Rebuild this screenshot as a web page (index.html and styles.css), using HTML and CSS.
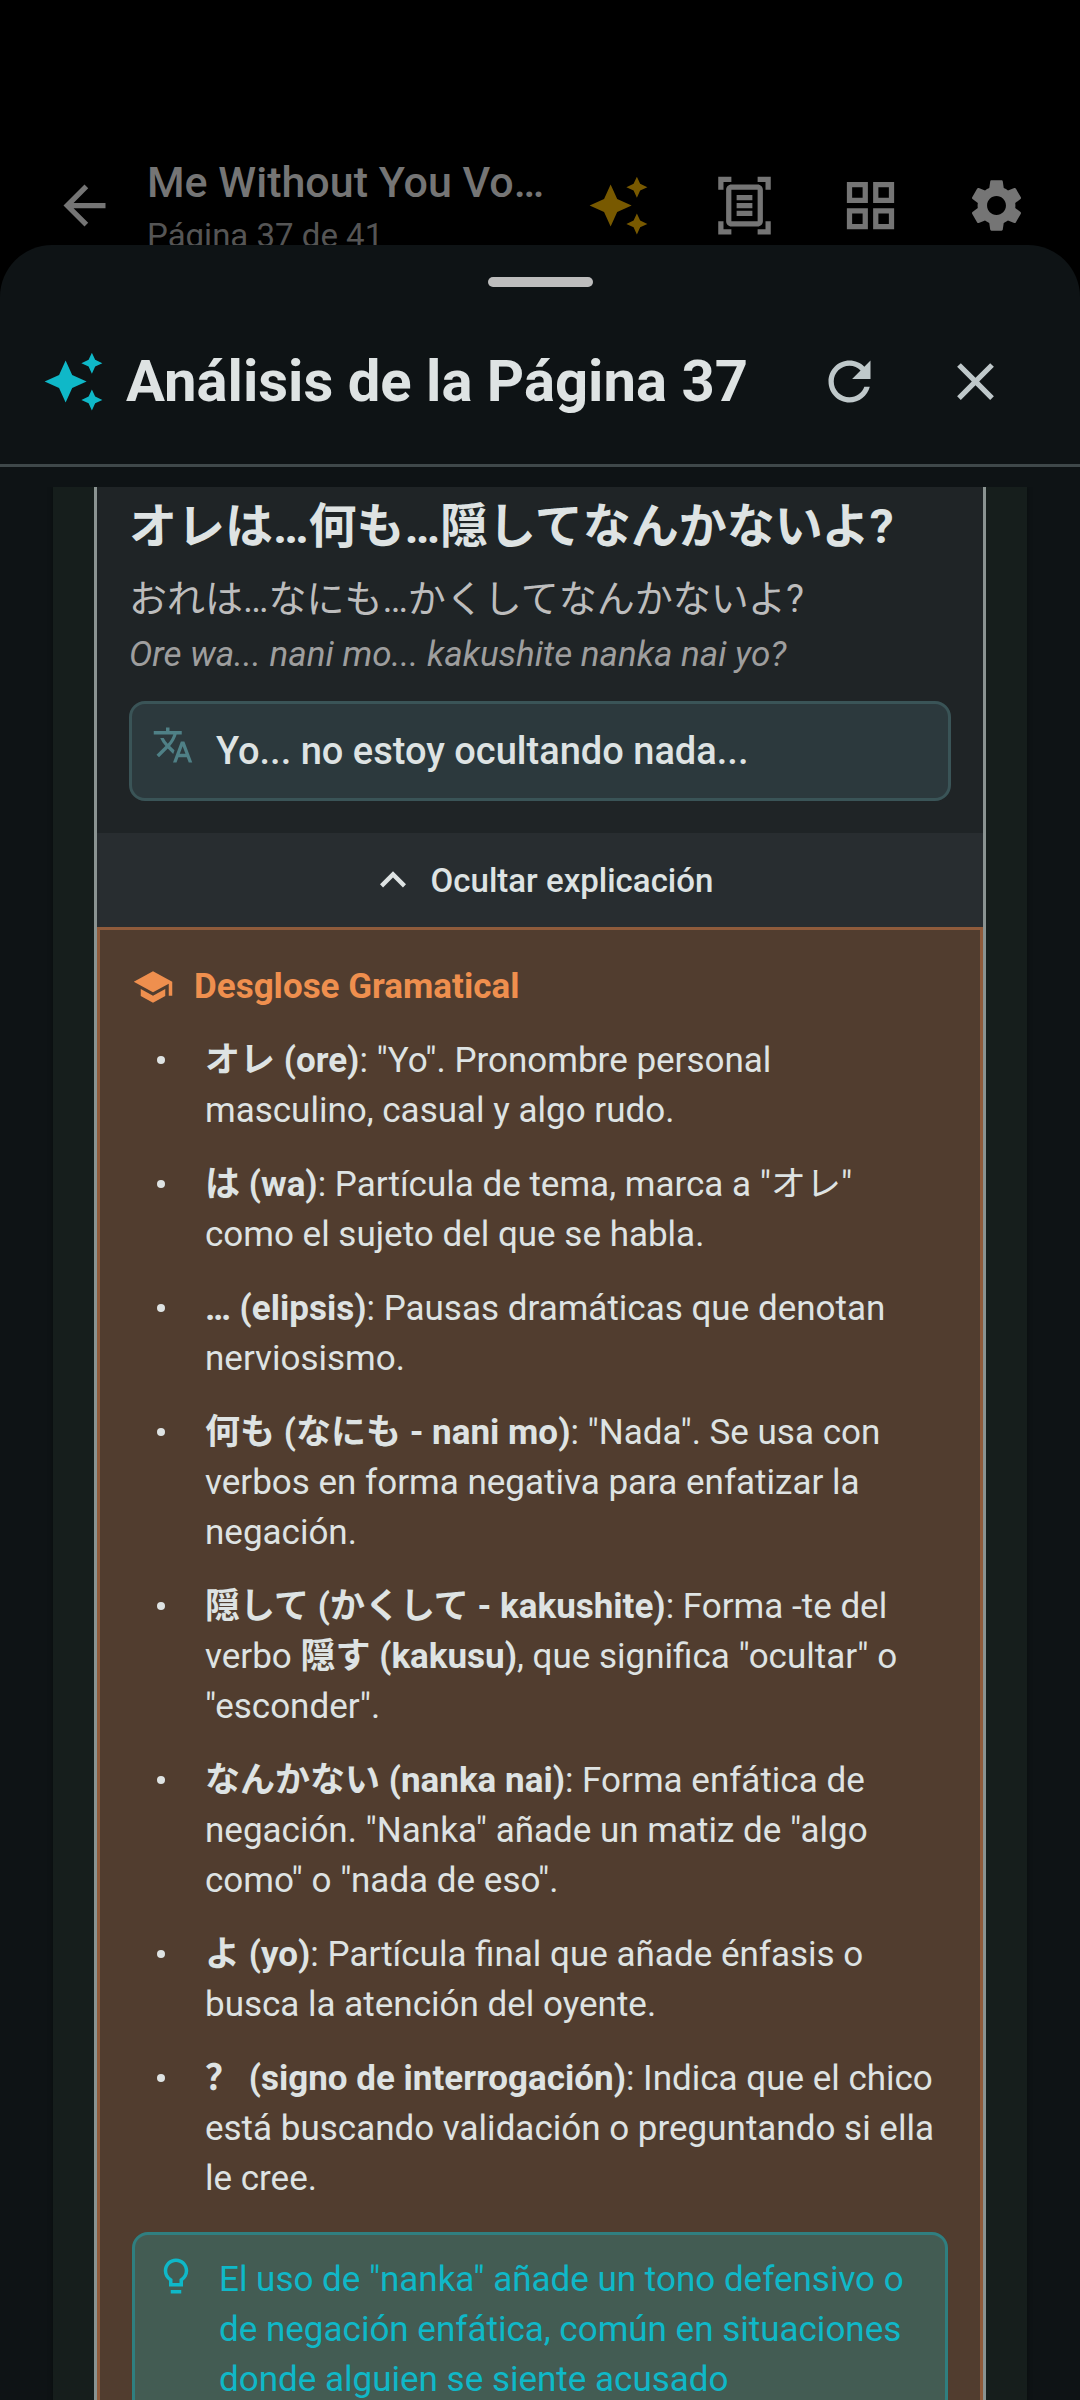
FILE: index.html
```html
<!DOCTYPE html>
<html lang="es">
<head>
    <meta charset="UTF-8">
    <meta name="viewport" content="width=device-width, initial-scale=1.0">
    <title>Análisis de la Página 37</title>
    <link rel="stylesheet" href="styles.css">
</head>
<body>
    <header class="app-bar">
        <button class="icon-btn" aria-label="Volver">
            <svg viewBox="0 0 24 24"><path d="M20 11H7.83l5.59-5.59L12 4l-8 8 8 8 1.41-1.41L7.83 13H20v-2z"/></svg>
        </button>
        <div class="app-title">
            <div class="title">Me Without You Vo…</div>
            <div class="subtitle">Página 37 de 41</div>
        </div>
        <button class="icon-btn gold" aria-label="Analizar">
            <svg viewBox="0 0 24 24"><path d="M19 9l1.25-2.75L23 5l-2.75-1.25L19 1l-1.25 2.75L15 5l2.75 1.25L19 9zm-7.5.5L9 4 6.5 9.5 1 12l5.5 2.5L9 20l2.5-5.5L17 12l-5.5-2.5zM19 15l-1.25 2.75L15 19l2.75 1.25L19 23l1.25-2.75L23 19l-2.75-1.25L19 15z"/></svg>
        </button>
        <button class="icon-btn" aria-label="Escanear">
            <svg viewBox="0 0 24 24"><path d="M7 3H4v3H2V1h5v2zm15 3V1h-5v2h3v3h2zM7 21H4v-3H2v5h5v-2zm13-3v3h-3v2h5v-5h-2zM17 18H7V6h10v12zm2-12c0-1.1-.9-2-2-2H7c-1.1 0-2 .9-2 2v12c0 1.1.9 2 2 2h10c1.1 0 2-.9 2-2V6zm-4 2H9v2h6V8zm0 3H9v2h6v-2zm0 3H9v2h6v-2z"/></svg>
        </button>
        <button class="icon-btn" aria-label="Páginas">
            <svg viewBox="0 0 24 24"><path d="M3 3v8h8V3H3zm6 6H5V5h4v4zm-6 4v8h8v-8H3zm6 6H5v-4h4v4zm4-16v8h8V3h-8zm6 6h-4V5h4v4zm-6 4v8h8v-8h-8zm6 6h-4v-4h4v4z"/></svg>
        </button>
        <button class="icon-btn" aria-label="Ajustes">
            <svg viewBox="0 0 24 24"><path d="M19.14 12.94c.04-.3.06-.61.06-.94 0-.32-.02-.64-.07-.94l2.03-1.58c.18-.14.23-.41.12-.61l-1.92-3.32c-.12-.22-.37-.29-.59-.22l-2.39.96c-.5-.38-1.03-.7-1.62-.94l-.36-2.54c-.04-.24-.24-.41-.48-.41h-3.84c-.24 0-.43.17-.47.41l-.36 2.54c-.59.24-1.13.57-1.62.94l-2.39-.96c-.22-.08-.47 0-.59.22L2.74 8.87c-.12.21-.08.47.12.61l2.03 1.58c-.05.3-.09.63-.09.94s.02.64.07.94l-2.03 1.58c-.18.14-.23.41-.12.61l1.92 3.32c.12.22.37.29.59.22l2.39-.96c.5.38 1.03.7 1.62.94l.36 2.54c.05.24.24.41.48.41h3.84c.24 0 .44-.17.47-.41l.36-2.54c.59-.24 1.13-.56 1.62-.94l2.39.96c.22.08.47 0 .59-.22l1.92-3.32c.12-.22.07-.47-.12-.61l-2.01-1.58zM12 15.6c-1.98 0-3.6-1.62-3.6-3.6s1.62-3.6 3.6-3.6 3.6 1.62 3.6 3.6-1.62 3.6-3.6 3.6z"/></svg>
        </button>
    </header>

    <main class="sheet">
        <div class="handle"></div>
        <div class="sheet-header">
            <svg class="sparkle" viewBox="0 0 24 24"><path d="M19 9l1.25-2.75L23 5l-2.75-1.25L19 1l-1.25 2.75L15 5l2.75 1.25L19 9zm-7.5.5L9 4 6.5 9.5 1 12l5.5 2.5L9 20l2.5-5.5L17 12l-5.5-2.5zM19 15l-1.25 2.75L15 19l2.75 1.25L19 23l1.25-2.75L23 19l-2.75-1.25L19 15z"/></svg>
            <h1>Análisis de la Página 37</h1>
            <button class="icon-btn" aria-label="Actualizar">
                <svg viewBox="0 0 24 24"><path d="M17.65 6.35C16.2 4.9 14.21 4 12 4c-4.42 0-7.99 3.58-7.99 8s3.57 8 7.99 8c3.73 0 6.84-2.55 7.73-6h-2.08c-.82 2.33-3.04 4-5.65 4-3.31 0-6-2.69-6-6s2.69-6 6-6c1.66 0 3.14.69 4.22 1.78L13 11h7V4l-2.35 2.35z"/></svg>
            </button>
            <button class="icon-btn" aria-label="Cerrar">
                <svg viewBox="0 0 24 24"><path d="M19 6.41L17.59 5 12 10.59 6.41 5 5 6.41 10.59 12 5 17.59 6.41 19 12 13.41 17.59 19 19 17.59 13.41 12z"/></svg>
            </button>
        </div>

        <div class="sheet-body">
            <div class="panel">
                <article class="card">
                    <div class="phrase">
                        <h2 lang="ja">オレは…何も…隠してなんかないよ?</h2>
                        <p class="reading" lang="ja">おれは…なにも…かくしてなんかないよ?</p>
                        <p class="romaji">Ore wa... nani mo... kakushite nanka nai yo?</p>
                        <div class="translation">
                            <svg viewBox="0 0 24 24"><path d="M12.87 15.07l-2.54-2.51.03-.03c1.74-1.94 2.98-4.17 3.71-6.53H17V4h-7V2H8v2H1v1.99h11.17C11.5 7.92 10.44 9.75 9 11.35 8.07 10.32 7.3 9.19 6.69 8h-2c.73 1.63 1.73 3.17 2.98 4.56l-5.09 5.02L4 19l5-5 3.11 3.11.76-2.04zM18.5 10h-2L12 22h2l1.12-3h4.75L21 22h2l-4.5-12zm-2.62 7l1.62-4.33L19.12 17h-3.24z"/></svg>
                            <p>Yo... no estoy ocultando nada...</p>
                        </div>
                    </div>

                    <button class="toggle">
                        <svg viewBox="0 0 24 24"><path d="M12 8l-6 6 1.41 1.41L12 10.83l4.59 4.58L18 14z"/></svg>
                        Ocultar explicación
                    </button>

                    <section class="grammar">
                        <h3>
                            <svg viewBox="0 0 24 24"><path d="M5 13.18v4L12 21l7-3.82v-4L12 17l-7-3.82zM12 3L1 9l11 6 9-4.91V17h2V9L12 3z"/></svg>
                            Desglose Gramatical
                        </h3>
                        <ul>
                            <li><b>オレ (ore)</b>: "Yo". Pronombre personal masculino, casual y algo rudo.</li>
                            <li><b>は (wa)</b>: Partícula de tema, marca a "オレ" como el sujeto del que se habla.</li>
                            <li><b>… (elipsis)</b>: Pausas dramáticas que denotan nerviosismo.</li>
                            <li><b>何も (なにも - nani mo)</b>: "Nada". Se usa con verbos en forma negativa para enfatizar la negación.</li>
                            <li><b>隠して (かくして - kakushite)</b>: Forma -te del verbo <b>隠す (kakusu)</b>, que significa "ocultar" o "esconder".</li>
                            <li><b>なんかない (nanka nai)</b>: Forma enfática de negación. "Nanka" añade un matiz de "algo como" o "nada de eso".</li>
                            <li><b>よ (yo)</b>: Partícula final que añade énfasis o busca la atención del oyente.</li>
                            <li><b><span class="mark" lang="zh-Hans">？</span> (signo de interrogación)</b>: Indica que el chico está buscando validación o preguntando si ella le cree.</li>
                        </ul>
                        <div class="tip">
                            <svg viewBox="0 0 24 24"><path d="M9 20h6v2H9zM12 2C8.14 2 5 5.14 5 9c0 2.38 1.19 4.47 3 5.74V18h8v-3.26c1.81-1.27 3-3.36 3-5.74 0-3.86-3.14-7-7-7zm2.85 11.1l-.85.6V16h-4v-2.3l-.85-.6A4.997 4.997 0 0 1 7 9c0-2.76 2.24-5 5-5s5 2.24 5 5c0 1.63-.8 3.16-2.15 4.1z"/></svg>
                            <p>El uso de "nanka" añade un tono defensivo o de negación enfática, común en situaciones donde alguien se siente acusado</p>
                        </div>
                    </section>
                </article>
            </div>
        </div>
    </main>
</body>
</html>
```
FILE: styles.css
```css
* {
    box-sizing: border-box;
}
body {
    margin: 0;
    height: 100vh;
    overflow: hidden;
    background: #000;
    color: #dee3e3;
    font-family: Roboto, "Noto Sans CJK JP", sans-serif;
}
h1, h2, h3, p, ul {
    margin: 0;
    padding: 0;
}
button {
    border: none;
    background: none;
    padding: 0;
    font-family: inherit;
    color: inherit;
    cursor: pointer;
}
svg {
    display: block;
    flex: none;
    fill: currentColor;
}

/* top bar, dimmed behind the sheet */
.app-bar {
    display: flex;
    align-items: center;
    padding: 142px 21px 0;
    color: #757575;
}
.icon-btn {
    display: flex;
    align-items: center;
    justify-content: center;
    flex: none;
    width: 126px;
    height: 126px;
}
.icon-btn svg {
    width: 63px;
    height: 63px;
}
.gold {
    color: #785900;
}
.app-title {
    flex: 1;
    min-width: 0;
    white-space: nowrap;
    padding-top: 8px;
}
.title {
    font-size: 43px;
    font-weight: 500;
    line-height: 54px;
}
.subtitle {
    font-size: 33px;
    line-height: 54px;
    color: #555;
}

/* bottom sheet */
.sheet {
    position: absolute;
    top: 245px;
    left: 0;
    right: 0;
    bottom: 0;
    display: flex;
    flex-direction: column;
    background: #0e1315;
    border-radius: 52px 52px 0 0;
}
.handle {
    width: 105px;
    height: 10px;
    margin: 32px auto 0;
    border-radius: 5px;
    background: #bdbdbd;
}
.sheet-header {
    display: flex;
    align-items: center;
    padding: 31px 42px 20px;
    border-bottom: 3px solid #3f484a;
}
.sheet-header .icon-btn {
    color: #bfc8ca;
}
.sparkle {
    width: 63px;
    height: 63px;
    color: #0fb8c8;
}
.sheet-header h1 {
    flex: 1;
    margin-left: 21px;
    font-size: 58px;
    font-weight: 700;
    line-height: 72px;
    white-space: nowrap;
}
.sheet-body {
    flex: 1;
    min-height: 0;
    margin-top: 20px;
    padding: 0 53px;
    overflow-y: auto;
    scrollbar-width: none;
}
.panel {
    padding: 0 41px;
    background: #161e1c;
    box-shadow: 0 0 4px #090d0d;
}
.card {
    border: solid #8a9391;
    border-width: 0 3px;
    background: #1f2426;
}
.phrase {
    padding: 4px 32px 32px;
}
.phrase h2 {
    font-size: 48px;
    font-weight: 700;
    line-height: 72px;
    white-space: nowrap;
}
.reading {
    margin-top: 8px;
    font-size: 38px;
    line-height: 56px;
    color: #bdbdbd;
}
.romaji {
    font-size: 35px;
    line-height: 56px;
    font-style: italic;
    color: #9e9e9e;
}
.translation {
    display: flex;
    gap: 22px;
    margin-top: 18px;
    padding: 20px;
    border: 3px solid #3a5457;
    border-radius: 16px;
    background: #2c393d;
}
.translation svg,
.grammar h3 svg,
.tip svg {
    width: 42px;
    height: 42px;
}
.translation svg {
    color: #4f8086;
}
.translation p {
    font-size: 38px;
    font-weight: 500;
    line-height: 54px;
}
.toggle {
    display: flex;
    align-items: center;
    justify-content: center;
    gap: 12px;
    width: 100%;
    height: 94px;
    background: #282d30;
    font-size: 33px;
    font-weight: 500;
}
.toggle svg {
    width: 52px;
    height: 52px;
}

/* grammar breakdown */
.grammar {
    padding: 32px;
    border: 3px solid #8f5b3b;
    background: #513d2f;
}
.grammar h3 {
    display: flex;
    align-items: center;
    gap: 20px;
    font-size: 35px;
    font-weight: 700;
    line-height: 50px;
    color: #ef8f4e;
}
.grammar ul {
    margin-top: 24px;
    padding: 0 8px 0 73px;
    list-style: none;
}
.grammar li {
    position: relative;
    margin-bottom: 24px;
    font-size: 35px;
    line-height: 50px;
}
.grammar li::before {
    content: "";
    position: absolute;
    left: -48px;
    top: 20px;
    width: 8px;
    height: 8px;
    border-radius: 50%;
    background: #dee3e3;
}
.grammar b {
    font-weight: 700;
}
.mark {
    font-family: "Noto Sans CJK SC", sans-serif;
    line-height: 1;
}
.tip {
    display: flex;
    gap: 22px;
    margin-top: 28px;
    padding: 20px;
    border: 3px solid #2f7f80;
    border-radius: 16px;
    background: #435c53;
    color: #0fb8c8;
}
.tip p {
    font-size: 35px;
    line-height: 50px;
}
```
